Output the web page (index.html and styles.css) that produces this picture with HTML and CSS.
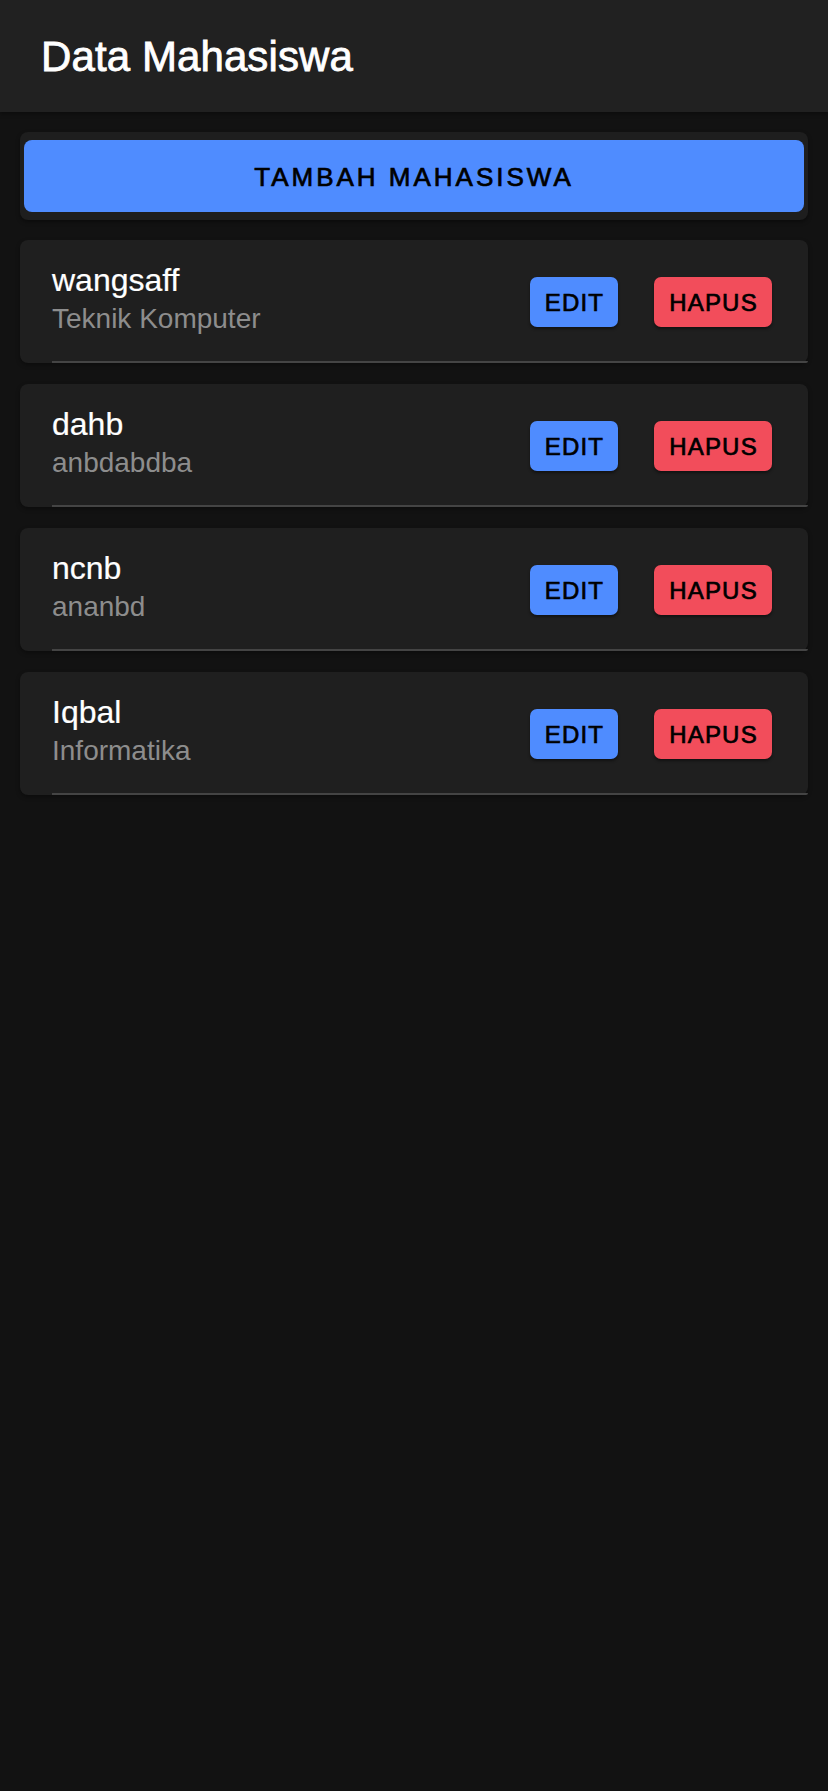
FILE: index.html
```html
<!DOCTYPE html>
<html lang="id">
<head>
<meta charset="utf-8">
<title>Data Mahasiswa</title>
<link rel="stylesheet" href="styles.css">
</head>
<body>
<header class="topbar">
  <h1 class="title">Data Mahasiswa</h1>
</header>
<main class="content">
  <div class="add-wrap">
    <button class="add-btn">TAMBAH MAHASISWA</button>
  </div>
  <ul class="list">
    <li class="card">
      <div class="info">
        <div class="name">wangsaff</div>
        <div class="major">Teknik Komputer</div>
      </div>
      <div class="actions">
        <button class="btn btn-edit">EDIT</button>
        <button class="btn btn-del">HAPUS</button>
      </div>
    </li>
    <li class="card">
      <div class="info">
        <div class="name">dahb</div>
        <div class="major">anbdabdba</div>
      </div>
      <div class="actions">
        <button class="btn btn-edit">EDIT</button>
        <button class="btn btn-del">HAPUS</button>
      </div>
    </li>
    <li class="card">
      <div class="info">
        <div class="name">ncnb</div>
        <div class="major">ananbd</div>
      </div>
      <div class="actions">
        <button class="btn btn-edit">EDIT</button>
        <button class="btn btn-del">HAPUS</button>
      </div>
    </li>
    <li class="card">
      <div class="info">
        <div class="name">Iqbal</div>
        <div class="major">Informatika</div>
      </div>
      <div class="actions">
        <button class="btn btn-edit">EDIT</button>
        <button class="btn btn-del">HAPUS</button>
      </div>
    </li>
  </ul>
</main>
</body>
</html>
```

FILE: styles.css
```css
* { box-sizing: border-box; }
html, body {
  margin: 0;
  padding: 0;
  background: #121212;
  font-family: "Liberation Sans", Arial, sans-serif;
  color: #fff;
}
body { min-height: 1791px; }

.topbar {
  height: 112px;
  background: #212121;
  display: flex;
  align-items: center;
  padding-left: 41px;
  box-shadow: 0 2px 4px rgba(0,0,0,0.35);
}
.title {
  margin: 0;
  font-size: 42px;
  font-weight: 400;
  color: #fff;
  letter-spacing: 0.1px;
  padding-top: 2px;
  -webkit-text-stroke: 0.8px #fff;
}

.content {
  padding: 20px 20px 0 20px;
}

.add-wrap {
  background: #1e1e1e;
  border-radius: 8px;
  padding: 8px 4px;
  box-shadow: 0 2px 4px rgba(0,0,0,0.4);
}
.add-btn {
  display: block;
  width: 100%;
  height: 72px;
  border: none;
  border-radius: 8px;
  background: #4f8cff;
  color: #000;
  font-family: "Liberation Sans", Arial, sans-serif;
  font-size: 26px;
  letter-spacing: 3px;
  -webkit-text-stroke: 0.7px #000;
  padding: 2px 0 0 0;
}

.list {
  list-style: none;
  margin: 20px 0 0 0;
  padding: 0;
  display: flex;
  flex-direction: column;
  gap: 21px;
}
.card {
  position: relative;
  height: 123px;
  background: #1f1f1f;
  border-radius: 8px;
  display: flex;
  align-items: center;
  justify-content: space-between;
  padding: 0 36px 0 32px;
  box-shadow: 0 2px 4px rgba(0,0,0,0.35);
}
.card::after {
  content: "";
  position: absolute;
  left: 32px;
  right: 0;
  bottom: 0;
  height: 2px;
  background: #444;
  border-bottom-right-radius: 8px;
}
.info {
  display: flex;
  flex-direction: column;
  margin-top: -3px;
}
.name {
  font-size: 32px;
  line-height: 38px;
  color: #fff;
  -webkit-text-stroke: 0.2px #fff;
}
.major {
  font-size: 28px;
  line-height: 40px;
  color: #8d8d8d;
}
.actions {
  display: flex;
  gap: 36px;
  align-items: center;
}
.btn {
  height: 50px;
  border: none;
  border-radius: 7px;
  color: #000;
  font-family: "Liberation Sans", Arial, sans-serif;
  font-size: 24px;
  letter-spacing: 1.2px;
  padding: 2px 0 0 1px;
  -webkit-text-stroke: 0.7px #000;
  box-shadow: 0 2px 3px rgba(0,0,0,0.45);
}
.btn-edit { background: #4f8cff; width: 88px; }
.btn-del { background: #f24d5b; width: 118px; }
```
